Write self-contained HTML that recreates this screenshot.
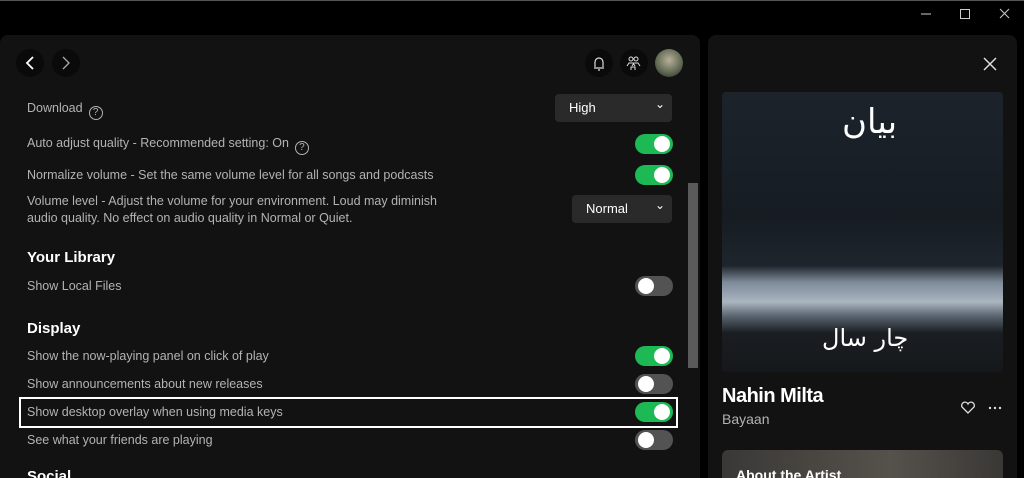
<!DOCTYPE html>
<html><head><style>
*{margin:0;padding:0;box-sizing:border-box}
html,body{width:1024px;height:478px;overflow:hidden}
body{background:#000;font-family:"Liberation Sans",sans-serif;position:relative;color:#b3b3b3}
.top{position:absolute;left:0;top:0;width:1024px;height:1px;background:#555}
.main{position:absolute;left:0;top:35px;width:700px;height:443px;background:#121212;border-radius:8px 8px 0 0;overflow:hidden}
.side{position:absolute;left:708px;top:35px;width:309px;height:443px;background:#121212;border-radius:8px 8px 0 0;overflow:hidden}
.t{position:absolute;font-size:12.5px;color:#b3b3b3;white-space:nowrap;line-height:16px}
.h{position:absolute;font-size:15px;font-weight:bold;color:#fff}
.tg{position:absolute;left:635px;width:38px;height:20px;border-radius:10px;background:#1db954}
.tg::after{content:"";position:absolute;right:3px;top:2px;width:16px;height:16px;border-radius:50%;background:#fff}
.tg.off{background:#535353}
.tg.off::after{left:3px;right:auto}
.sel{position:absolute;background:#2a2a2a;border-radius:4px;color:#fff;font-size:13px;padding-left:14px;line-height:28px;height:28px}
.sel::after{content:"⌄";position:absolute;right:7px;top:-4px;font-size:12px}
.circ{position:absolute;width:28px;height:28px;border-radius:50%;background:#0a0a0a}
.q{display:inline-block;width:14px;height:14px;border:1.3px solid #b3b3b3;border-radius:50%;font-size:10px;text-align:center;line-height:12px;margin-left:6px;vertical-align:-3px}
</style></head><body>
<div class="top"></div>
<svg style="position:absolute;left:918px;top:7px" width="100" height="14"><line x1="3" y1="7" x2="13" y2="7" stroke="#ccc"/><rect x="42.5" y="2.5" width="9" height="9" fill="none" stroke="#ccc"/><path d="M82 2l9 9M91 2l-9 9" stroke="#ccc"/></svg>
<div class="main">
<div class="circ" style="left:16px;top:14px"></div>
<div class="circ" style="left:52px;top:14px"></div>
<svg style="position:absolute;left:16px;top:14px" width="70" height="28"><path d="M17 8l-6 6 6 6" stroke="#fff" stroke-width="1.8" fill="none"/><path d="M47 8l6 6-6 6" stroke="#aaa" stroke-width="1.3" fill="none"/></svg>
<div class="circ" style="left:585px;top:14px"></div>
<div class="circ" style="left:620px;top:14px"></div>
<div class="circ" style="left:655px;top:14px;background:radial-gradient(circle at 50% 40%,#b8b09a,#5d6650 60%,#222)"></div>
<svg style="position:absolute;left:585px;top:14px" width="60" height="28"><path d="M9 19h10M10 18v-5a4 4 0 018 0v5M13 21h2" stroke="#ddd" stroke-width="1.2" fill="none"/><circle cx="46" cy="10" r="2" stroke="#ddd" fill="none"/><circle cx="51" cy="10" r="2" stroke="#ddd" fill="none"/><path d="M42 17l2-3h4l2 3M47 17l2-3h4l2 3M46 21v-3h4v3" stroke="#ddd" fill="none"/></svg>
<div class="t" style="left:27px;top:65px">Download<span class="q">?</span></div>
<div class="sel" style="left:555px;top:59px;width:117px">High</div>
<div class="t" style="left:27px;top:100px">Auto adjust quality - Recommended setting: On<span class="q">?</span></div>
<div class="tg" style="top:99px"></div>
<div class="t" style="left:27px;top:132px">Normalize volume - Set the same volume level for all songs and podcasts</div>
<div class="tg" style="top:130px"></div>
<div class="t" style="left:27px;top:158px;line-height:17px">Volume level - Adjust the volume for your environment. Loud may diminish<br>audio quality. No effect on audio quality in Normal or Quiet.</div>
<div class="sel" style="left:572px;top:160px;width:100px">Normal</div>
<div class="h" style="left:27px;top:214px">Your Library</div>
<div class="t" style="left:27px;top:243px">Show Local Files</div>
<div class="tg off" style="top:241px"></div>
<div class="h" style="left:27px;top:285px">Display</div>
<div class="t" style="left:27px;top:313px">Show the now-playing panel on click of play</div>
<div class="tg" style="top:311px"></div>
<div class="t" style="left:27px;top:341px">Show announcements about new releases</div>
<div class="tg off" style="top:339px"></div>
<div style="position:absolute;left:19px;top:362px;width:659px;height:31px;border:2px solid #fff"></div>
<div class="t" style="left:27px;top:369px">Show desktop overlay when using media keys</div>
<div class="tg" style="top:367px"></div>
<div class="t" style="left:27px;top:397px">See what your friends are playing</div>
<div class="tg off" style="top:395px"></div>
<div class="h" style="left:27px;top:433px;height:10px;overflow:hidden">Social</div>
<div style="position:absolute;left:688px;top:148px;width:10px;height:185px;background:#5a5a5a"></div>
</div>
<div class="side">
<svg style="position:absolute;left:275px;top:22px" width="14" height="14"><path d="M1 1l12 12M13 1l-12 12" stroke="#ddd" stroke-width="1.5"/></svg>
<div style="position:absolute;left:14px;top:57px;width:281px;height:280px;border-radius:4px;overflow:hidden;background:linear-gradient(#1c232b 0%,#161c22 45%,#1e252c 62%,#7e8b9a 68%,#aab5c0 75%,#5a6570 80%,#1a1e22 86%,#15181b 100%)">
<div style="position:absolute;left:120px;top:10px;color:#fff;font-size:34px;font-family:'DejaVu Sans',sans-serif">بیان</div>
<div style="position:absolute;left:100px;top:232px;color:#fff;font-size:24px;font-family:'DejaVu Sans',sans-serif">چار سال</div>
</div>
<div style="position:absolute;left:14px;top:350px;font-size:20px;font-weight:bold;color:#fff;letter-spacing:-.5px">Nahin Milta</div>
<div style="position:absolute;left:14px;top:376px;font-size:14px;color:#b3b3b3">Bayaan</div>
<svg style="position:absolute;left:252px;top:366px" width="42" height="14"><path d="M8 12L2 6a3 3 0 016-3 3 3 0 016 3z" stroke="#ddd" stroke-width="1.3" fill="none"/><circle cx="30" cy="7" r="1.2" fill="#ddd"/><circle cx="35" cy="7" r="1.2" fill="#ddd"/><circle cx="40" cy="7" r="1.2" fill="#ddd"/></svg>
<div style="position:absolute;left:14px;top:415px;width:281px;height:28px;border-radius:6px 6px 0 0;overflow:hidden;background:linear-gradient(90deg,#3a3835,#55524c 60%,#3a3835)"><div style="position:absolute;left:14px;top:17px;color:#fff;font-weight:bold;font-size:14px;line-height:16px">About the Artist</div></div>
</div>
</body></html>
